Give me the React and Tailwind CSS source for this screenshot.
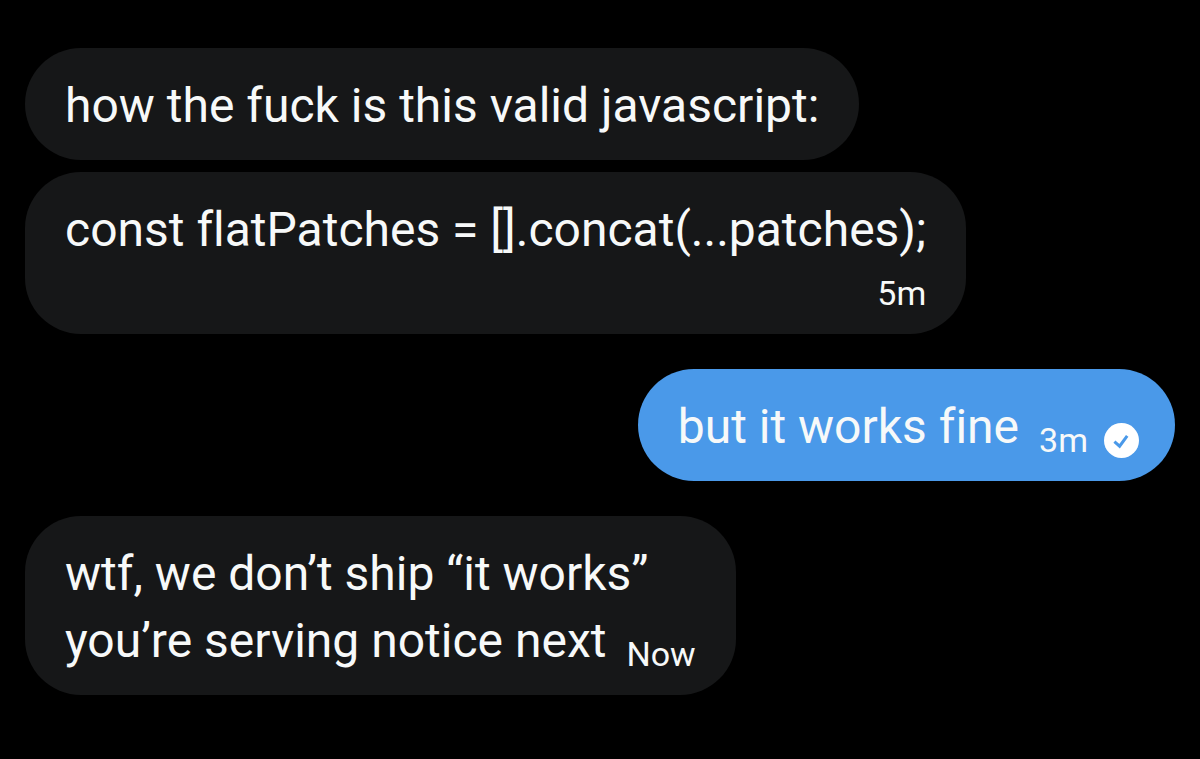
const messages = [
  {
    id: 1,
    from: "them",
    lines: ["how the fuck is this valid javascript:"],
  },
  {
    id: 2,
    from: "them",
    lines: ["const flatPatches = [].concat(...patches);"],
    time: "5m",
    timeBelow: true,
  },
  {
    id: 3,
    from: "me",
    lines: ["but it works fine"],
    time: "3m",
    seen: true,
  },
  {
    id: 4,
    from: "them",
    lines: ["wtf, we don’t ship “it works”", "you’re serving notice next"],
    time: "Now",
  },
];

function SeenIcon() {
  return (
    <svg viewBox="0 0 35 35" className="size-[35px]" role="img" aria-label="Seen">
      <circle cx="17.5" cy="17.5" r="17.5" fill="#fff" />
      <path
        d="M10.4 18.6l5.2 4.6 7.6-10.4"
        fill="none"
        stroke="#4a99e9"
        strokeWidth="3"
      />
    </svg>
  );
}

function Meta({ message }) {
  return (
    <span className="flex items-center justify-end gap-4">
      <time className="text-[34px] leading-10">{message.time}</time>
      {message.seen && <SeenIcon />}
    </span>
  );
}

function Message({ message }) {
  const { lines, time, timeBelow } = message;
  const mine = message.from === "me";

  return (
    <div
      className={`flex flex-col rounded-[56px] pt-6 pb-[21px] pl-10 ${
        mine ? "bg-[#4a99e9] pr-9" : "bg-[#161718] pr-10"
      } ${timeBelow ? "gap-[10px]" : ""}`}
    >
      {lines.map((line, i) => (
        <p key={line} className="flex items-end gap-5">
          <span>{line}</span>
          {time && !timeBelow && i === lines.length - 1 && (
            <Meta message={message} />
          )}
        </p>
      ))}
      {timeBelow && <Meta message={message} />}
    </div>
  );
}

export default function App() {
  return (
    <main className="min-h-screen bg-black px-[25px] py-12 font-['Roboto',sans-serif] text-[48px] leading-[67px] text-[#f7f9f9] [font-variant-ligatures:none]">
      <ul>
        {messages.map((message, i) => {
          const sameSender = i > 0 && messages[i - 1].from === message.from;
          return (
            <li
              key={message.id}
              className={`flex ${message.from === "me" ? "justify-end" : ""} ${
                i === 0 ? "" : sameSender ? "mt-3" : "mt-[35px]"
              }`}
            >
              <Message message={message} />
            </li>
          );
        })}
      </ul>
    </main>
  );
}
